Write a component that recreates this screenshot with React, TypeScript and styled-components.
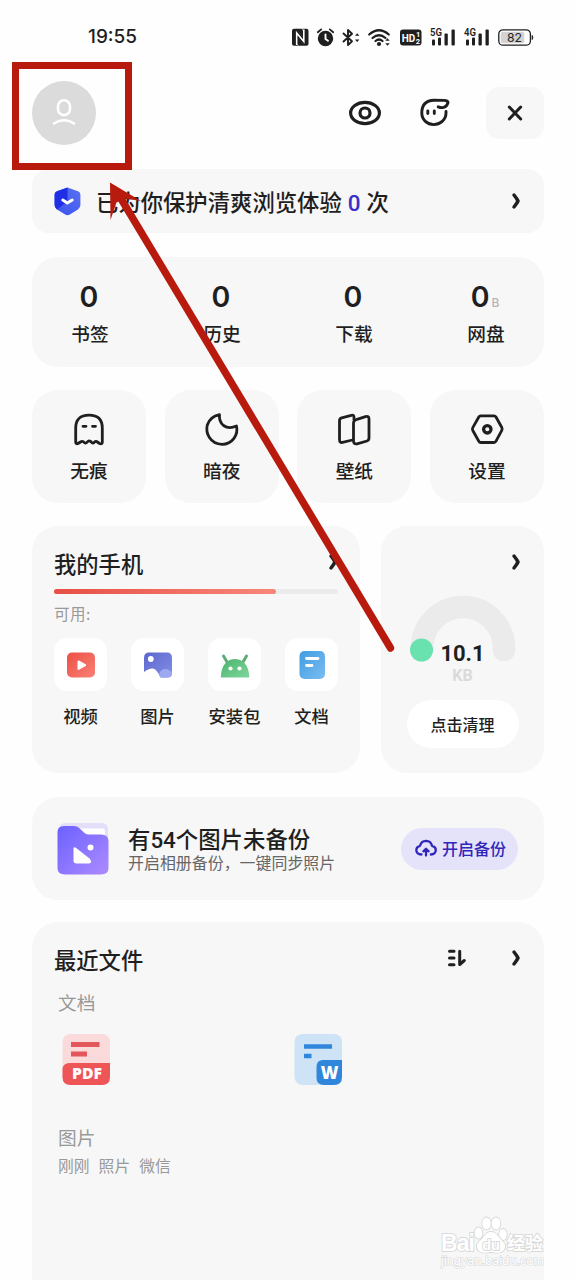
import React from "react";
import styled, { createGlobalStyle } from "styled-components";

const ink = "#1f1f1f";
const cjk = `"Noto Sans CJK SC", sans-serif`;

const GlobalStyle = createGlobalStyle`
  * { box-sizing: border-box; }
  body { margin: 0; background: #fff; }
  svg { display: block; flex: none; overflow: visible; }
`;

const Screen = styled.div`
  position: relative;
  width: 576px;
  height: 1280px;
  overflow: hidden;
  padding: 0 32px;
  background: #fefefe;
  color: ${ink};
  font-family: Inter, ${cjk};
`;

const StatusBar = styled.div`
  display: flex;
  align-items: center;
  height: 74px;
  padding: 0 10px 0 56px;
`;

const Clock = styled.span`
  margin-right: auto;
  font: 500 19px/24px Inter, sans-serif;
`;

const StatusIcons = styled.div`
  display: flex;
  align-items: center;
  gap: 8px;
`;

const Header = styled.header`
  display: flex;
  align-items: center;
  height: 78px;
`;

const Avatar = styled.div`
  display: grid;
  place-items: center;
  width: 64px;
  height: 64px;
  margin-right: auto;
  border-radius: 50%;
  background: #dbdbdb;
`;

const HeaderAction = styled.div<{ $gap: number }>`
  margin-right: ${(p) => p.$gap}px;
`;

const CloseButton = styled.div`
  display: grid;
  place-items: center;
  width: 58px;
  height: 52px;
  border-radius: 13px;
  background: #f7f7f7;
`;

const Card = styled.section<{ $radius?: number }>`
  border-radius: ${(p) => p.$radius ?? 26}px;
  background: #f7f7f7;
`;

const Banner = styled(Card)`
  display: flex;
  align-items: center;
  height: 64px;
  margin-top: 17px;
  padding: 0 23px 0 22px;
`;

const BannerText = styled.div`
  margin: 0 auto 0 15px;
  font: 500 22.35px/32px ${cjk};
  white-space: pre;
`;

const BannerCount = styled.span`
  margin: 0 6px;
  color: #3a2fc8;
  font: 500 22.5px/30px Roboto, sans-serif;
`;

const Stats = styled(Card)`
  display: grid;
  grid-template-columns: repeat(4, 132px);
  justify-content: center;
  height: 110px;
  margin-top: 24px;
  padding: 23px 2px 0 0;
`;

const Stat = styled.div`
  display: flex;
  flex-direction: column;
  align-items: center;
`;

const StatValue = styled.div`
  display: flex;
  align-items: baseline;
  font: 600 28.5px/34px Inter, sans-serif;
`;

const StatUnit = styled.span`
  margin-left: 2px;
  color: #b5b5b5;
  font: 500 12px/14px Inter, sans-serif;
`;

const Label = styled.div<{ $size?: number }>`
  font: 500 ${(p) => p.$size ?? 18.7}px/28px ${cjk};
  white-space: nowrap;
`;

const StatLabel = styled(Label)`
  margin: 5px 0 0 2px;
`;

const Tiles = styled.div`
  display: flex;
  justify-content: space-between;
  margin-top: 23px;
`;

const Tile = styled(Card)`
  display: flex;
  flex-direction: column;
  align-items: center;
  width: 114px;
  height: 113px;
  padding-top: 22px;
`;

const TileLabel = styled(Label)`
  margin-top: 10px;
`;

const Columns = styled.div`
  display: flex;
  justify-content: space-between;
  margin-top: 23px;
`;

const PhoneCard = styled(Card)`
  width: 328px;
  height: 247px;
  padding: 20px 22px 0;
`;

const TitleRow = styled.div`
  display: flex;
  align-items: center;
  height: 32px;
`;

const Title = styled.h2`
  margin: 1px auto 0 0;
  font: 500 22.3px/32px ${cjk};
`;

const Track = styled.div`
  height: 5px;
  margin-top: 11px;
  border-radius: 3px;
  background: #ebebeb;
`;

const Used = styled.div`
  width: 222px;
  height: 5px;
  border-radius: 3px;
  background: linear-gradient(90deg, #e74f45, #f8877b);
`;

const Muted = styled.div<{ $size: number }>`
  color: #999;
  font: 400 ${(p) => p.$size}px/24px ${cjk};
  white-space: pre;
`;

const Available = styled(Muted)`
  margin-top: 7px;
  letter-spacing: 0.5px;
`;

const FileTypes = styled.div`
  display: flex;
  justify-content: space-between;
  width: 284px;
  margin-top: 13px;
`;

const FileType = styled.div`
  display: flex;
  flex-direction: column;
  align-items: center;
  width: 53px;
`;

const FileTypeIcon = styled.div`
  display: grid;
  place-items: center;
  width: 53px;
  height: 53px;
  margin-bottom: 11px;
  border-radius: 13px;
  background: #fff;
`;

const CleanCard = styled(Card)`
  display: flex;
  flex-direction: column;
  align-items: center;
  width: 163px;
  height: 247px;
  padding-top: 27px;
`;

const CleanLink = styled.div`
  align-self: flex-end;
  margin-right: 23px;
`;

const Gauge = styled.div`
  display: grid;
  justify-items: center;
  margin-top: 25px;
`;

const GaugeArc = styled.svg`
  grid-area: 1 / 1;
`;

const GaugeText = styled.div`
  grid-area: 1 / 1;
  display: flex;
  flex-direction: column;
  align-items: center;
  padding-top: 45px;
  font: 700 22px/26px Roboto, sans-serif;
`;

const GaugeUnit = styled.span`
  color: #dadada;
  font: 700 16px/18px Roboto, sans-serif;
`;

const CleanButton = styled.div`
  display: grid;
  place-items: center;
  width: 112px;
  height: 48px;
  margin-top: 15px;
  border-radius: 24px;
  background: #fff;
`;

const Backup = styled(Card)`
  display: flex;
  align-items: center;
  height: 103px;
  margin-top: 24px;
  padding: 0 26px 0 25px;
`;

const BackupText = styled.div`
  margin: 1px auto 0 19px;
`;

const BackupTitle = styled.div`
  font: 500 22.4px/26px Roboto, ${cjk};
`;

const BackupHint = styled.div`
  color: #666;
  font: 400 15.95px/18px ${cjk};
`;

const BackupButton = styled.div`
  display: flex;
  align-items: center;
  gap: 5px;
  height: 42px;
  width: 117px;
  padding: 0 0 1px 14px;
  border-radius: 21px;
  background: #e5e3fa;
  color: #3026ba;
`;

const Recent = styled(Card)`
  height: 380px;
  margin-top: 22px;
  padding: 20px 23px 0 22px;
`;

const RecentGroup = styled.div`
  padding: 16px 0 0 4px;
`;

const SortIcon = styled.svg`
  margin-right: 44px;
`;

const Documents = styled.div`
  display: flex;
  gap: 183px;
  margin: 20px 0 39px 4px;
`;

const Tags = styled.div`
  display: flex;
  gap: 9px;
  margin-top: 5px;
`;

const MarkLayer = styled.svg`
  position: absolute;
  left: 0;
  top: 0;
  pointer-events: none;
`;

const Watermark = styled.svg`
  position: absolute;
  left: 438px;
  top: 1214px;
`;

const Chevron = () => (
  <svg width="10" height="18" viewBox="0 0 10 18" fill="none" stroke={ink} strokeWidth="3.500" strokeLinecap="round" strokeLinejoin="round">
    <path d="M3 3 Q6.200 7 7 9 Q6.200 11 3 15" />
  </svg>
);

const line = { fill: "none", stroke: ink, strokeWidth: 3, strokeLinecap: "round", strokeLinejoin: "round" } as const;

const SignalIcon = ({ label }: { label: string }) => (
  <svg width="26" height="20" viewBox="0 0 26 20" fill={ink}>
    <text x="0" y="9" fontFamily="Roboto, sans-serif" fontSize="10.500" fontWeight="600" textLength="12" lengthAdjust="spacingAndGlyphs">{label}</text>
    <rect x="2" y="12.500" width="3" height="6" rx="1" />
    <rect x="8" y="10.500" width="3" height="8" rx="1" />
    <rect x="14.500" y="6.500" width="3.300" height="12" rx="1" />
    <rect x="21.500" y="2.500" width="3.300" height="16" rx="1" />
  </svg>
);

const Status = () => (
  <StatusIcons>
    <svg width="17" height="18" viewBox="0 0 17 18">
      <path d="M2 .700H4.500L11.300 9V3L10.500 .700H14.500Q16.500 .700 16.500 2.700V15.700Q16.500 17.700 14.500 17.700H12.300L5.200 9.200V15L6 17.700H2Q0 17.700 0 15.700V2.700Q0 .700 2 .700Z" fill={ink} />
      <path d="M4.700 17V5L11.800 13.500V1.500" fill="none" stroke="#fff" strokeWidth="1.600" />
      <path d="M4 .700H10L11 3V9Z" fill={ink} />
      <path d="M5.500 8.500 12.500 17.700H6.500L5.500 15.500Z" fill={ink} />
    </svg>
    <svg width="17" height="19" viewBox="0 0 17 19">
      <circle cx="8.500" cy="10.500" r="7.700" fill={ink} />
      <path d="M.8 4.200 4.200 1.400M16.200 4.200 12.800 1.400" {...line} strokeWidth="1.800" />
      <path d="M8.500 6.500V11L11 12.800" {...line} stroke="#fff" strokeWidth="1.900" />
    </svg>
    <svg width="18" height="19" viewBox="0 0 18 19">
      <path d="M1.500 5.500 10 13.200 6 17V2L10 5.800 1.500 13.500" {...line} strokeWidth="1.900" />
      <path d="M13 7.800 15.200 5.200 17.400 7.800ZM13 11.400 15.200 14 17.400 11.400Z" fill={ink} />
    </svg>
    <svg width="24" height="19" viewBox="0 0 24 19">
      <path d="M1.200 6.500Q11 -2 20.800 6.500M4.500 10Q11 4.500 17.500 10M7.500 13Q11 10 14.500 13" {...line} strokeWidth="2.200" />
      <circle cx="11" cy="16" r="2.100" fill={ink} />
      <path d="M17.300 12.800 19.500 10.200 21.700 12.800ZM17.300 15.200 19.500 17.800 21.700 15.200Z" fill={ink} />
    </svg>
    <svg width="22" height="17" viewBox="0 0 22 17">
      <rect width="21.500" height="16" y=".500" rx="3" fill={ink} />
      <g fill="#fff" fontFamily="Roboto, sans-serif" fontWeight="700">
        <text x="1.800" y="12.600" fontSize="11.500" textLength="13.500" lengthAdjust="spacingAndGlyphs">HD</text>
        <text x="16" y="8" fontSize="7.500">1</text>
        <text x="15.800" y="15" fontSize="7.500">2</text>
      </g>
    </svg>
    <SignalIcon label="5G" />
    <SignalIcon label="4G" />
    <svg width="36" height="17" viewBox="0 0 36 17">
      <rect x=".8" y=".8" width="31.600" height="15.400" rx="4.300" fill="#fff" stroke={ink} strokeWidth="1.300" />
      <rect x="2.800" y="2.800" width="23.500" height="11.400" rx="2" fill="#d3d3d3" />
      <path d="M34.200 6.500Q35.500 8.500 34.200 10.500Z" fill={ink} stroke={ink} />
      <text x="16.500" y="13" textAnchor="middle" fontFamily="Inter, sans-serif" fontSize="12.300" fontWeight="400" fill={ink}>82</text>
    </svg>
  </StatusIcons>
);

const ShieldIcon = () => (
  <svg width="27" height="29" viewBox="0 0 27 29">
    <defs>
      <linearGradient id="shield" x1="0" y1="1" x2="1" y2="0">
        <stop offset="0" stopColor="#3b53ee" />
        <stop offset="1" stopColor="#5871f2" />
      </linearGradient>
    </defs>
    <path d="M13.500 .500 24 4.200Q26.400 5 26.400 7.500V18Q26.400 20.500 24 22.500L15.800 27.600Q13.500 29 11.200 27.600L3 22.500Q.6 20.500.6 18V7.500Q.6 5 3 4.200Z" fill="url(#shield)" />
    <path d="M13.500 .500 3 4.200Q.6 5 .6 7.500V18Q.6 20.500 3 22.500L13.500 14.500Z" fill="#1e2fe5" />
    <path d="M8.800 13 13.300 16 18.200 13" {...line} stroke="#fff" />
  </svg>
);

const Tool = ({ kind }: { kind: string }) => (
  <svg width="34" height="34" viewBox="0 0 34 34" {...line} strokeWidth="2.800">
    {kind === "ghost" && (
      <>
        <path d="M3.700 16Q3.700 3.200 17 3.200Q30.300 3.200 30.300 16V30.500Q30 32.500 27.500 31.500L24.700 29.500Q23.500 29 22.300 30.200Q20.800 32.200 19.300 30L18.200 29.200Q17 28.500 15.800 29.500Q13.500 32.500 11.800 30Q10.200 28.800 8.500 30Q3.700 33.500 3.700 30Z" />
        <path d="M11 14.300H14M20.500 14.300H23.500" />
      </>
    )}
    {kind === "moon" && <path d="M14.500 2.600Q5 4.600 2.300 13C.3 21 5 32 17 32.300C27.500 32.300 33.500 22.500 31.500 14Q24 17.500 18.500 13.500Q13.800 9.500 14.500 2.600Z" />}
    {kind === "paper" && (
      <>
        <path d="M17 8V5.200Q17 2.500 14.300 3.300L4.700 5.900Q2.500 6.500 2.500 9V27.500Q2.500 31 5.500 30.400L15.500 28" />
        <path d="M20 7.300 28.500 4.600Q32 3.700 32 7V26Q32 28.200 30 29L20 31.800Q16.500 32.500 16.500 29V11Q16.500 8.500 20 7.300Z" />
      </>
    )}
    {kind === "settings" && (
      <>
        <path d="M10.700 3.800H24Q25.300 3.800 26 5L31.800 15.500Q32.500 17 31.800 18.300L26 29.200Q25.300 30.500 24 30.500H10.700Q9.500 30.500 8.800 29.300L2.800 18.500Q2 17 2.800 15.600L8.800 5Q9.500 3.800 10.700 3.800Z" />
        <circle cx="17.300" cy="17.300" r="3.700" strokeWidth="3.300" />
      </>
    )}
  </svg>
);

const TypeArt = ({ kind }: { kind: string }) => (
  <svg width="30" height="30" viewBox="0 0 30 30">
    <defs>
      <linearGradient id="video" x2="1" y2="1"><stop stopColor="#eb5046" /><stop offset="1" stopColor="#fa8074" /></linearGradient>
      <linearGradient id="photo" x2="1" y2="1"><stop stopColor="#5b66cf" /><stop offset="1" stopColor="#848fe4" /></linearGradient>
      <linearGradient id="apk" x2="1" y2="1"><stop stopColor="#48b36c" /><stop offset="1" stopColor="#81d69d" /></linearGradient>
      <linearGradient id="doc" x2="1" y2="1"><stop stopColor="#419ce3" /><stop offset="1" stopColor="#7bbdf0" /></linearGradient>
    </defs>
    {kind === "video" && (
      <>
        <rect x="1" y="2.500" width="28" height="25" rx="5" fill="url(#video)" />
        <path d="M12.500 11.500V19L19.200 15.200Z" fill="#fff" stroke="#fff" strokeWidth="2" strokeLinejoin="round" />
      </>
    )}
    {kind === "photo" && (
      <>
        <path d="M1 8Q1 2.500 6 2.500H24Q29 2.500 29 8V23Q29 27.500 24 27.500H18C15.500 25 14 18.500 9 18.500Q5.500 18.500 1 22Z" fill="url(#photo)" />
        <path d="M16 25.500Q16 20 22 19Q26 19 29 22.500V23Q29 27.500 24 27.500H17.500Z" fill="#9ca8f0" />
        <circle cx="7.800" cy="9" r="2.900" fill="#fff" />
      </>
    )}
    {kind === "apk" && (
      <>
        <path d="M3.500 6 7 12M26.500 6 23 12" stroke="#5fab78" strokeWidth="3" strokeLinecap="round" />
        <path d="M.8 27.500C1 14 8 9 15 9S29 14 29.300 27.500Z" fill="url(#apk)" />
        <circle cx="10.500" cy="18.500" r="2.100" fill="#fff" />
        <circle cx="19.500" cy="18.500" r="2.100" fill="#fff" />
      </>
    )}
    {kind === "doc" && (
      <>
        <rect x="2.500" y="1" width="25.500" height="28" rx="5" fill="url(#doc)" />
        <path d="M9.500 8.500H21M9.500 15.500H15" stroke="#fff" strokeWidth="2.800" strokeLinecap="round" />
      </>
    )}
  </svg>
);

const stats = [
  { label: "书签" },
  { label: "历史" },
  { label: "下载" },
  { label: "网盘", unit: "B" },
];

const tools = [
  { kind: "ghost", label: "无痕" },
  { kind: "moon", label: "暗夜" },
  { kind: "paper", label: "壁纸" },
  { kind: "settings", label: "设置" },
];

const types = [
  { kind: "video", label: "视频" },
  { kind: "photo", label: "图片" },
  { kind: "apk", label: "安装包" },
  { kind: "doc", label: "文档" },
];

export default function App() {
  return (
    <Screen>
      <GlobalStyle />
      <StatusBar>
        <Clock>19:55</Clock>
        <Status />
      </StatusBar>

      <Header>
        <Avatar>
          <svg width="24" height="28" viewBox="0 0 24 28" {...line} stroke="#fff" strokeWidth="2.600">
            <rect x="6" y="1.200" width="12" height="15" rx="6" />
            <path d="M2 24.500Q12 18 22 24.500" />
          </svg>
        </Avatar>
        <HeaderAction $gap={39}>
          <svg width="32" height="26" viewBox="0 0 32 26" {...line} strokeWidth="3.200">
            <ellipse cx="16" cy="13" rx="14.400" ry="10.600" />
            <circle cx="16" cy="13" r="5" />
          </svg>
        </HeaderAction>
        <HeaderAction $gap={36}>
          <svg width="30" height="28" viewBox="0 0 30 28" {...line} strokeWidth="2.900">
            <path d="M26 12.500V14C26 21 20 25.600 13.700 25.600S1.800 21 1.800 14C1.800 6 6 1.400 14 1.200L24 1.400Q28.200 1.700 28 3.700Q26.500 8.200 22.500 8.600Q20 8.600 18.200 7.800" />
            <path d="M7.800 12V14.500M14.300 12V14.500" />
          </svg>
        </HeaderAction>
        <CloseButton>
          <svg width="16" height="16" viewBox="0 0 16 16" {...line}>
            <path d="M2.300 2 13.700 14M13.700 2 2.300 14" />
          </svg>
        </CloseButton>
      </Header>

      <Banner $radius={17}>
        <ShieldIcon />
        <BannerText>已为你保护清爽浏览体验<BannerCount>0</BannerCount>次</BannerText>
        <Chevron />
      </Banner>

      <Stats>
        {stats.map((s) => (
          <Stat key={s.label}>
            <StatValue>0{s.unit && <StatUnit>{s.unit}</StatUnit>}</StatValue>
            <StatLabel>{s.label}</StatLabel>
          </Stat>
        ))}
      </Stats>

      <Tiles>
        {tools.map((t) => (
          <Tile key={t.kind}>
            <Tool kind={t.kind} />
            <TileLabel>{t.label}</TileLabel>
          </Tile>
        ))}
      </Tiles>

      <Columns>
        <PhoneCard>
          <TitleRow>
            <Title>我的手机</Title>
            <Chevron />
          </TitleRow>
          <Track><Used /></Track>
          <Available $size={15.5}>可用:</Available>
          <FileTypes>
            {types.map((t) => (
              <FileType key={t.kind}>
                <FileTypeIcon><TypeArt kind={t.kind} /></FileTypeIcon>
                <Label $size={17.3}>{t.label}</Label>
              </FileType>
            ))}
          </FileTypes>
        </PhoneCard>
        <CleanCard>
          <CleanLink><Chevron /></CleanLink>
          <Gauge>
            <GaugeArc width="106" height="68" viewBox="0 0 106 68">
              <path d="M12 54V52A41 41 0 0 1 94 52V54" fill="none" stroke="#ebebeb" strokeWidth="22.500" strokeLinecap="round" />
              <circle cx="11.500" cy="54" r="11.500" fill="#69e2b0" />
            </GaugeArc>
            <GaugeText>
              10.1
              <GaugeUnit>KB</GaugeUnit>
            </GaugeText>
          </Gauge>
          <CleanButton><Label $size={16}>点击清理</Label></CleanButton>
        </CleanCard>
      </Columns>

      <Backup>
        <svg width="52" height="52" viewBox="0 0 52 52">
          <defs>
            <linearGradient id="folder" x2="1" y2="1">
              <stop stopColor="#6b61ff" />
              <stop offset="1" stopColor="#ad8bff" />
            </linearGradient>
          </defs>
          <rect x="2" width="49" height="25" rx="6" fill="#e5def9" />
          <rect x="20" y="5.500" width="28" height="14" rx="3" fill="#fff" />
          <path d="M.5 9Q.5 3 7 3H17Q20 3 22.200 5L27.500 10Q29.500 11.500 32 11.500H44Q51.500 11.500 51.500 18V45Q51.500 51.500 44 51.500H8Q.5 51.500 .5 45Z" fill="url(#folder)" />
          <path d="M18.500 24.500 32.500 35.500Q36 40 32 40.500H19.500Q16.500 40.500 16.500 37.500V25.500Q16.800 23.500 18.500 24.500Z" fill="#fff" />
          <circle cx="33.500" cy="24.500" r="3" fill="#fff" />
        </svg>
        <BackupText>
          <BackupTitle>有54个图片未备份</BackupTitle>
          <BackupHint>开启相册备份，一键同步照片</BackupHint>
        </BackupText>
        <BackupButton>
          <svg width="22" height="19" viewBox="0 0 22 19" {...line} stroke="#3026ba" strokeWidth="2.300">
            <path d="M6.500 15.500Q1.300 15.300 1.300 11Q1.500 7.500 5 6.800Q6.200 2 11 1.800Q16 2 17 6.800Q20.700 7.500 20.800 11Q20.700 15.300 15.800 15.500M11 16.500V10.500M8.400 12.300 11 9.800 13.600 12.300" />
          </svg>
          <Label $size={16}>开启备份</Label>
        </BackupButton>
      </Backup>

      <Recent>
        <TitleRow>
          <Title>最近文件</Title>
          <SortIcon width="20" height="18" viewBox="0 0 20 18" {...line} strokeWidth="3">
            <path d="M2.500 2.300H7M2.500 9H7M2.500 15.700H7M12.700 2.300V15.500L17.300 11.500" />
          </SortIcon>
          <Chevron />
        </TitleRow>
        <RecentGroup>
          <Muted $size={18.7}>文档</Muted>
          <Documents>
            <svg width="49" height="52" viewBox="0 0 49 52">
              <rect x=".500" width="47.500" height="51" rx="8" fill="#fadada" />
              <path d="M11.500 10.500H35M11.500 20H22.500" stroke="#e2575b" strokeWidth="5" strokeLinecap="square" strokeLinejoin="round" />
              <path d="M.500 34Q2 29 8 29H48V43Q48 51 40 51H8.500Q.500 51 .500 43Z" fill="#ed5557" />
              <text x="25" y="45" textAnchor="middle" textLength="30" lengthAdjust="spacingAndGlyphs" fontFamily="Open Sans, sans-serif" fontWeight="800" fontSize="15.500" fill="#fff">PDF</text>
            </svg>
            <svg width="49" height="52" viewBox="0 0 49 52">
              <rect x=".500" width="47.500" height="51" rx="8" fill="#cfe3f6" />
              <path d="M10 12.500H38M10 22H17.500" stroke="#3086da" strokeWidth="4.600" />
              <path d="M22.500 33Q22.500 26 29 26H48V43Q48 51 40 51H30Q22.500 51 22.500 44Z" fill="#3086da" />
              <text x="35.500" y="44.500" textAnchor="middle" fontFamily="Open Sans, sans-serif" fontWeight="800" fontSize="17" fill="#fff">W</text>
            </svg>
          </Documents>
          <Muted $size={18.7}>图片</Muted>
          <Tags>
            <Muted $size={15.8}>刚刚</Muted>
            <Muted $size={15.8}>照片</Muted>
            <Muted $size={15.8}>微信</Muted>
          </Tags>
        </RecentGroup>
      </Recent>

      <Watermark width="108" height="60" viewBox="0 0 108 60" fill="#fff" stroke="#d9d9d9" strokeWidth="1.800" paintOrder="stroke">
        <text x="3" y="36.500" fontFamily="Liberation Sans, sans-serif" fontWeight="700" fontSize="23" textLength="34">Bai</text>
        <ellipse cx="40.500" cy="19" rx="3.800" ry="5.500" />
        <ellipse cx="48.500" cy="9.500" rx="4.300" ry="6" />
        <ellipse cx="58" cy="9.500" rx="4.300" ry="6" />
        <ellipse cx="65" cy="20.500" rx="3.800" ry="5.500" />
        <path d="M53 18C59 18 60.500 24 65 27.500Q69 32 65.500 36.500C61 40.500 57 38 53 38S45 40.500 40.500 36.500Q37 32 41 27.500C46 24 47 18 53 18Z" />
        <text x="53" y="35.500" textAnchor="middle" fontFamily="Liberation Sans, sans-serif" fontWeight="700" fontSize="14.500">du</text>
        <text x="69" y="35.500" fontFamily="Noto Sans CJK SC, sans-serif" fontWeight="700" fontSize="18" textLength="36">经验</text>
        <text x="3" y="50.500" fontFamily="Liberation Sans, sans-serif" fontSize="12.500" textLength="103" strokeWidth="1.200">jingyan.baidu.com</text>
      </Watermark>

      <MarkLayer width="576" height="1280" viewBox="0 0 576 1280">
        <rect x="15.500" y="65.500" width="113" height="101" fill="none" stroke="#b91a0e" strokeWidth="7" />
        <path d="M120 197 390.500 648" stroke="#b91a0e" strokeWidth="7.400" strokeLinecap="round" />
        <path d="M110 182.500 141 201 125 198.500 116.500 202.500 110.500 220Z" fill="#b91a0e" />
      </MarkLayer>
    </Screen>
  );
}
